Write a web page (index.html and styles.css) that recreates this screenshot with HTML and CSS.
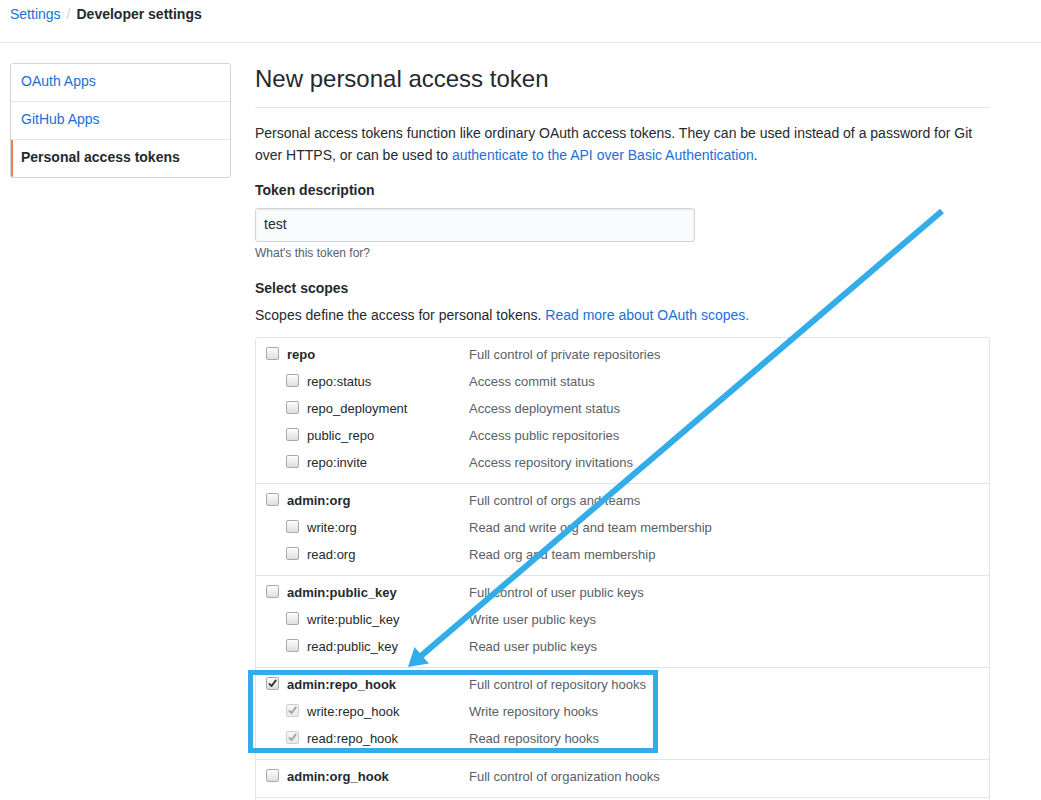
FILE: index.html
```html
<!DOCTYPE html>
<html>
<head>
<meta charset="utf-8">
<link rel="stylesheet" href="styles.css">
</head>
<body>
<div class="page">
  <div class="breadcrumb">
    <a href="#" class="crumb-link">Settings</a><span class="crumb-sep">/</span><strong class="crumb-current">Developer settings</strong>
  </div>
  <div class="layout">
    <nav class="menu">
      <a href="#" class="menu-item">OAuth Apps</a>
      <a href="#" class="menu-item">GitHub Apps</a>
      <a href="#" class="menu-item selected">Personal access tokens</a>
    </nav>
    <main class="main">
      <h2 class="subhead">New personal access token</h2>
      <p class="intro">Personal access tokens function like ordinary OAuth access tokens. They can be used instead of a password for Git over HTTPS, or can be used to <a href="#">authenticate to the API over Basic Authentication</a>.</p>
      <div class="field">
        <label class="field-label">Token description</label>
        <div class="input">test</div>
        <p class="note">What's this token for?</p>
      </div>
      <div class="field">
        <label class="field-label tight">Select scopes</label>
        <p class="field-desc">Scopes define the access for personal tokens. <a href="#">Read more about OAuth scopes.</a></p>
      </div>
      <div class="scopes">
        <div class="group">
          <div class="row top"><span class="name"><span class="cb"></span>repo</span><span class="desc">Full control of private repositories</span></div>
          <div class="row sub"><span class="name"><span class="cb"></span>repo:status</span><span class="desc">Access commit status</span></div>
          <div class="row sub"><span class="name"><span class="cb"></span>repo_deployment</span><span class="desc">Access deployment status</span></div>
          <div class="row sub"><span class="name"><span class="cb"></span>public_repo</span><span class="desc">Access public repositories</span></div>
          <div class="row sub"><span class="name"><span class="cb"></span>repo:invite</span><span class="desc">Access repository invitations</span></div>
        </div>
        <div class="group">
          <div class="row top"><span class="name"><span class="cb"></span>admin:org</span><span class="desc">Full control of orgs and teams</span></div>
          <div class="row sub"><span class="name"><span class="cb"></span>write:org</span><span class="desc">Read and write org and team membership</span></div>
          <div class="row sub"><span class="name"><span class="cb"></span>read:org</span><span class="desc">Read org and team membership</span></div>
        </div>
        <div class="group">
          <div class="row top"><span class="name"><span class="cb"></span>admin:public_key</span><span class="desc">Full control of user public keys</span></div>
          <div class="row sub"><span class="name"><span class="cb"></span>write:public_key</span><span class="desc">Write user public keys</span></div>
          <div class="row sub"><span class="name"><span class="cb"></span>read:public_key</span><span class="desc">Read user public keys</span></div>
        </div>
        <div class="group">
          <div class="row top"><span class="name"><span class="cb checked"><svg viewBox="0 0 12 12"><path d="M2.6 6.4 L5 8.8 L9.6 2.6" /></svg></span>admin:repo_hook</span><span class="desc">Full control of repository hooks</span></div>
          <div class="row sub"><span class="name"><span class="cb checked disabled"><svg viewBox="0 0 12 12"><path d="M2.6 6.4 L5 8.8 L9.6 2.6" /></svg></span>write:repo_hook</span><span class="desc">Write repository hooks</span></div>
          <div class="row sub"><span class="name"><span class="cb checked disabled"><svg viewBox="0 0 12 12"><path d="M2.6 6.4 L5 8.8 L9.6 2.6" /></svg></span>read:repo_hook</span><span class="desc">Read repository hooks</span></div>
        </div>
        <div class="group">
          <div class="row top"><span class="name"><span class="cb"></span>admin:org_hook</span><span class="desc">Full control of organization hooks</span></div>
        </div>
        <div class="group">
          <div class="row top"><span class="name"><span class="cb"></span>gist</span><span class="desc">Create gists</span></div>
        </div>
        <div class="group">
          <div class="row top"><span class="name"><span class="cb"></span>notifications</span><span class="desc">Access notifications</span></div>
        </div>
      </div>
    </main>
  </div>
  <svg class="annot" width="1041" height="800" viewBox="0 0 1041 800">
    <line x1="942" y1="211" x2="419" y2="657.6" stroke="#33adea" stroke-width="6"/>
    <polygon points="408,667 414.5,646.9 428.9,663.6" fill="#33adea"/>
    <rect x="250.5" y="672.5" width="405" height="78" fill="none" stroke="#33adea" stroke-width="5"/>
  </svg>
</div>
</body>
</html>
```

FILE: styles.css
```css
* { box-sizing: border-box; }
html, body { margin: 0; padding: 0; background: #fff; }
body {
  font-family: "Liberation Sans", Arial, sans-serif;
  font-size: 14px;
  line-height: 20px;
  color: #24292e;
}
a { color: #1a6fd8; text-decoration: none; }

.page { position: relative; width: 1041px; min-height: 800px; }

.breadcrumb {
  padding: 4px 10px 18px;
  border-bottom: 1px solid #e1e4e8;
  font-size: 14px;
  line-height: 20px;
}
.crumb-sep { color: #d1d5da; padding: 0 6px; }
.crumb-current { font-weight: bold; color: #24292e; }

.layout {
  display: flex;
  align-items: flex-start;
  gap: 24px;
  padding: 20px 0 0 10px;
}

.menu {
  width: 221px;
  flex: none;
  border: 1px solid #d1d5da;
  border-radius: 3px;
  background: #fff;
  overflow: hidden;
}
.menu-item {
  display: block;
  padding: 7px 10px 10px;
  line-height: 20px;
  border-bottom: 1px solid #e1e4e8;
  color: #1a6fd8;
}
.menu-item:last-child { border-bottom: 0; }
.menu-item.selected {
  font-weight: bold;
  color: #24292e;
  border-left: 3px solid #e9824f;
  margin-left: -1px;
  padding-left: 8px;
}

.main { width: 735px; flex: none; }

.subhead {
  margin: 0;
  font-size: 24px;
  font-weight: normal;
  line-height: 32px;
  padding-bottom: 12px;
  border-bottom: 1px solid #e1e4e8;
}

.intro {
  margin: 14px 0 0;
  line-height: 22px;
}

.field { margin-top: 14px; }
.field-label {
  display: block;
  font-weight: bold;
  line-height: 20px;
  margin-bottom: 8px;
}
.field-label.tight { margin-bottom: 6px; }
.input {
  width: 440px;
  height: 34px;
  padding: 5px 8px 7px;
  background: #fafbfc;
  border: 1px solid #d1d5da;
  border-radius: 3px;
  box-shadow: inset 0 1px 2px rgba(27,31,35,0.075);
  line-height: 20px;
  color: #24292e;
}
.note {
  margin: 2px 0 0;
  font-size: 12px;
  line-height: 18px;
  color: #586069;
}
.field + .field { margin-top: 16px; }
.field-desc {
  margin: 0;
  line-height: 22px;
}

.scopes {
  margin-top: 11px;
  border: 1px solid #e1e4e8;
  border-radius: 3px;
  box-shadow: 0 1px 1px rgba(0,0,0,0.03);
}
.group {
  padding: 3px 0 7px;
  border-top: 1px solid #e1e4e8;
}
.group:first-child { border-top: 0; }

.row {
  display: flex;
  height: 27px;
  line-height: 27px;
  font-size: 13px;
  padding-left: 10px;
}
.name {
  display: flex;
  align-items: flex-start;
  width: 203px;
  flex: none;
  color: #24292e;
}
.row.top .name { font-weight: bold; }
.row.sub .name { padding-left: 20px; }
.desc { color: #586069; }

.cb {
  width: 13px;
  height: 13px;
  margin-top: 6px;
  margin-right: 8px;
  flex: none;
  border: 1px solid #a9a9a9;
  border-radius: 2px;
  background: linear-gradient(#fdfdfd, #dedede);
  display: flex;
  align-items: center;
  justify-content: center;
}
.cb svg { width: 11px; height: 11px; display: block; }
.cb svg path { fill: none; stroke: #333; stroke-width: 2; stroke-linecap: round; stroke-linejoin: round; }
.cb.disabled { border-color: #cfcfcf; background: linear-gradient(#f6f6f6, #e9e9e9); }
.cb.disabled svg path { stroke: #a3a3a3; }

.annot {
  position: absolute;
  left: 0;
  top: 0;
  pointer-events: none;
}
```
